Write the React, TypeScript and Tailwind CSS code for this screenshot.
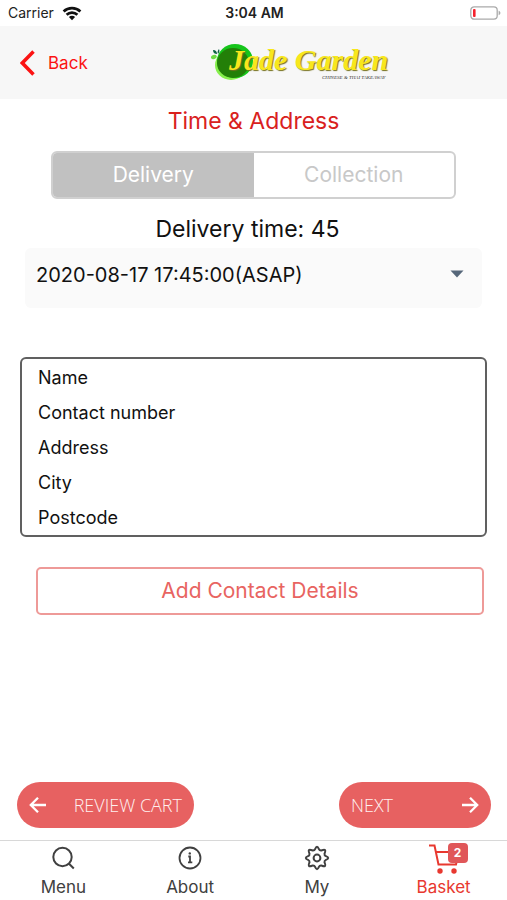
import type { ReactNode } from "react";

const contactFields = ["Name", "Contact number", "Address", "City", "Postcode"];

function StatusBar() {
  return (
    <div className="flex h-[26px] items-center justify-between pl-2 pr-1.5 text-[14px] leading-4 text-[#222]">
      <div className="flex flex-1 items-center gap-2">
        <span>Carrier</span>
        <svg width="20" height="15" viewBox="0 0 20 15" fill="none" stroke="#111" strokeWidth="2.7" aria-hidden="true">
          <path d="M1.6 5.4a12.2 12.2 0 0 1 16.8 0" />
          <path d="M4.6 8.8a7.8 7.8 0 0 1 10.8 0" />
          <path d="M10 14.2 6.9 11a4.4 4.4 0 0 1 6.2 0z" fill="#111" stroke="none" />
        </svg>
      </div>
      <time className="font-semibold">3:04 AM</time>
      <div className="flex flex-1 justify-end">
        <svg width="31" height="14" viewBox="0 0 31 14" role="img" aria-label="Battery low">
          <rect x="0.8" y="0.8" width="26.4" height="12.4" rx="3.4" fill="#fff" stroke="#aaa" strokeWidth="1.3" />
          <rect x="3" y="3" width="2.6" height="8" rx="1" fill="#f5222d" />
          <path d="M28.6 4.8c2.4.7 2.4 3.7 0 4.4z" fill="#aaa" />
        </svg>
      </div>
    </div>
  );
}

function Logo() {
  return (
    <svg width="178" height="42" viewBox="0 0 178 42" role="img" aria-label="Jade Garden">
      <ellipse cx="20" cy="23" rx="16" ry="15" fill="#86ef4c" />
      <ellipse cx="24" cy="19" rx="18" ry="17" fill="#16c51b" />
      <ellipse cx="22" cy="21" rx="16" ry="15" fill="#237f08" />
      <ellipse cx="2.8" cy="15" rx="3" ry="2" fill="#6edb45" transform="rotate(-20 2.8 15)" />
      <path d="M2 8c3 0 4 2 4 4-2 0-4-1-4-4zM8 7c1 2 0 4-1 5-1-2 0-4 1-5z" fill="#0d6244" />
      <g fontFamily="Liberation Serif, serif" fontStyle="italic" fontWeight="700">
        <text x="18" y="28" fontSize="30" fill="#f8e71c" className="[text-shadow:1px_1px_1px_#75701c]">
          Jade Garden
        </text>
        <text x="111" y="37" fontSize="5" fontWeight="400" fill="#333">CHINESE &amp; THAI TAKEAWAY</text>
      </g>
    </svg>
  );
}

function Arrow({ back = false }: { back?: boolean }) {
  return (
    <svg width="18" height="18" viewBox="0 0 18 18" fill="none" stroke="#fff" strokeWidth="2.3" aria-hidden="true">
      <path d={back ? "M17 9H2M9 1.8 1.8 9 9 16.2" : "M1 9h15M9 1.8 16.2 9 9 16.2"} />
    </svg>
  );
}

function Tab({ label, active = false, children }: { label: string; active?: boolean; children: ReactNode }) {
  return (
    <a
      href={"#" + label.toLowerCase()}
      aria-current={active ? "page" : undefined}
      className={`flex flex-col items-center ${active ? "text-[#e8382f]" : "text-[#404040]"}`}
    >
      <span className="flex h-[34px] items-center justify-center">{children}</span>
      <span className="text-[17px] leading-6">{label}</span>
    </a>
  );
}

export default function App() {
  return (
    <div className="flex min-h-screen flex-col bg-white font-['Inter','Liberation_Sans',sans-serif] text-[#111]">
      <StatusBar />
      <header className="flex h-[73px] items-center bg-[#f7f7f7] pl-5">
        <button className="flex items-center gap-[13px] text-[17px] leading-6 text-[#fb1313]">
          <svg width="15" height="26" viewBox="0 0 15 26" fill="none" stroke="currentColor" strokeWidth="3.5" aria-hidden="true">
            <path d="M13.5 1.5 2.3 13l11.2 11.5" />
          </svg>
          <span>Back</span>
        </button>
        <div className="flex flex-1 justify-center pl-1.5">
          <Logo />
        </div>
      </header>

      <main className="flex flex-1 flex-col">
        <h1 className="mt-2 text-center text-[23px] leading-7 text-[#d9211d]">Time &amp; Address</h1>
        <div className="mx-[51px] mt-4 flex h-12 overflow-hidden rounded-md border-2 border-[#d0d0d0] text-[21px]">
          <button aria-pressed="true" className="flex-1 bg-[#c1c1c1] text-white">Delivery</button>
          <button aria-pressed="false" className="flex-1 text-[#c8c8c8]">Collection</button>
        </div>
        <label htmlFor="slot" className="mr-3 mt-4 text-center text-[23px] leading-7">
          Delivery time: 45
        </label>
        <div className="relative mx-[25px] mt-[5px]">
          <select id="slot" className="h-[60px] w-full appearance-none rounded-md bg-[#fafafa] pb-[7px] pl-[11px] pr-12 text-[20px]">
            <option>2020-08-17 17:45:00(ASAP)</option>
          </select>
          <svg className="pointer-events-none absolute right-[18px] top-[22px]" width="14" height="8" viewBox="0 0 14 8" aria-hidden="true">
            <path d="M.5.5h13L7 7.5z" fill="#56677a" />
          </svg>
        </div>

        <ul className="mx-5 mt-[49px] rounded-md border-2 border-[#606060] pl-4 pt-px text-[18px] leading-[35px]">
          {contactFields.map((field) => (
            <li key={field}>{field}</li>
          ))}
        </ul>
        <button className="ml-9 mr-[23px] mt-[30px] h-12 rounded-[5px] border-2 border-[#ee9a98] text-[21px] text-[#e86461]">
          Add Contact Details
        </button>

        <div className="mb-3 mt-auto flex justify-between pl-[17px] pr-4 pt-6 font-['Open_Sans','Liberation_Sans',sans-serif] text-[18px] font-light text-[#fff0f0]">
          <button className="flex h-[46px] w-[177px] items-center justify-between rounded-full bg-[#e76161] px-3">
            <Arrow back />
            <span>REVIEW CART</span>
          </button>
          <button className="flex h-[46px] w-[152px] items-center justify-between rounded-full bg-[#e76161] px-3">
            <span>NEXT</span>
            <Arrow />
          </button>
        </div>
      </main>

      <nav className="grid h-[60px] grid-cols-4 border-t border-[#d8d8d8]">
        <Tab label="Menu">
          <svg width="24" height="24" viewBox="0 0 24 24" fill="none" stroke="currentColor" strokeWidth="2" aria-hidden="true">
            <circle cx="11.5" cy="11" r="9.2" />
            <path d="m17.8 17.5 5 5" />
          </svg>
        </Tab>
        <Tab label="About">
          <svg width="24" height="24" viewBox="0 0 24 24" fill="none" stroke="currentColor" strokeWidth="1.8" aria-hidden="true">
            <circle cx="12" cy="12" r="10.5" />
            <path d="M10.3 10.5H12v5.8M10 16.3h4.3" />
            <circle cx="11.8" cy="7.4" r="1.2" fill="currentColor" stroke="none" />
          </svg>
        </Tab>
        <Tab label="My">
          <svg width="26" height="26" viewBox="0 0 26 26" fill="none" stroke="currentColor" strokeWidth="2" strokeLinejoin="round" aria-hidden="true">
            <path d="M11.1 4.1Q13 -.5 14.9 4.1Q15.6 5.8 17.5 5.5L18 5.2Q22.6 3.4 20.8 8L20.5 8.5Q20.2 10.4 21.9 11.1Q26.5 13 21.9 14.9Q20.2 15.6 20.5 17.5L20.8 18Q22.6 22.6 18 20.8L17.5 20.5Q15.6 20.2 14.9 21.9Q13 26.5 11.1 21.9Q10.4 20.2 8.5 20.5L8 20.8Q3.4 22.6 5.2 18L5.5 17.5Q5.8 15.6 4.1 14.9Q-.5 13 4.1 11.1Q5.8 10.4 5.5 8.5L5.2 8Q3.4 3.4 8 5.2L8.5 5.5Q10.4 5.8 11.1 4.1z" />
            <circle cx="13" cy="13" r="3.4" />
          </svg>
        </Tab>
        <Tab label="Basket" active>
          <span className="relative block">
            <svg width="32" height="31" viewBox="0 0 32 31" fill="none" stroke="currentColor" strokeWidth="2" aria-hidden="true">
              <path d="M1 2.5h5.5l4 19h17.5L31 9H8" />
              <circle cx="12" cy="28" r="2.7" fill="currentColor" stroke="none" />
              <circle cx="26" cy="28" r="2.7" fill="currentColor" stroke="none" />
            </svg>
            <span className="absolute -right-2 top-0 flex h-5 w-5 items-center justify-center rounded bg-[#e05759] text-xs font-bold text-white">
              2
            </span>
          </span>
        </Tab>
      </nav>
    </div>
  );
}
